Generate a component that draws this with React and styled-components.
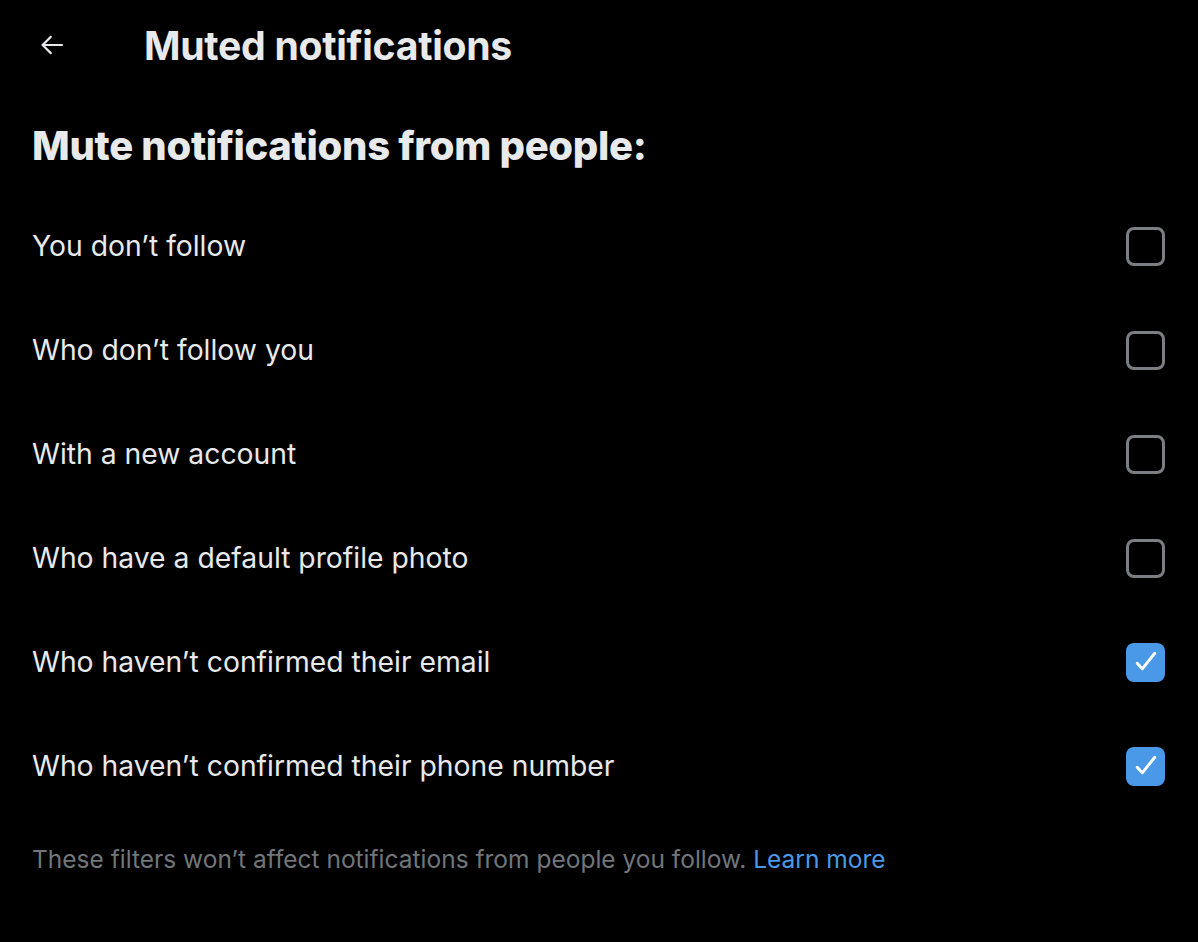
import React, { useState } from "react";
import styled, { createGlobalStyle } from "styled-components";

const GlobalStyle = createGlobalStyle`
  html, body {
    margin: 0;
    padding: 0;
    background: #000;
  }
  body {
    font-family: Inter, "Noto Sans", sans-serif;
    color: #e7e9ea;
  }
`;

const Page = styled.div`
  width: 1198px;
  height: 942px;
  background: #000;
  box-sizing: border-box;
`;

const Header = styled.div`
  height: 90px;
  display: flex;
  align-items: center;
  padding-left: 36px;
`;

const BackButton = styled.button`
  width: 32px;
  height: 32px;
  padding: 0;
  border: none;
  background: none;
  color: #e7e9ea;
  display: flex;
  align-items: center;
  justify-content: center;
  margin-right: 76px;
  cursor: pointer;
`;

const Title = styled.h1`
  margin: 0;
  font-size: 39.2px;
  font-weight: 700;
  letter-spacing: -0.3px;
  color: #e7e9ea;
`;

const Section = styled.div`
  padding: 0 33px 0 32px;
`;

const Heading = styled.h2`
  margin: 0;
  height: 104px;
  padding-top: 6px;
  box-sizing: border-box;
  display: flex;
  align-items: center;
  font-size: 40px;
  font-weight: 800;
  letter-spacing: -0.3px;
  color: #e7e9ea;
`;

const Row = styled.label`
  height: 104px;
  display: flex;
  align-items: center;
  justify-content: space-between;
  cursor: pointer;
`;

const RowText = styled.span`
  font-size: 28.3px;
  font-weight: 400;
  color: #e7e9ea;
`;

const Box = styled.span`
  width: 39px;
  height: 39px;
  box-sizing: border-box;
  border-radius: 8px;
  border: ${(p) => (p.$checked ? "none" : "3px solid #7b7f83")};
  background: ${(p) => (p.$checked ? "#4a99e9" : "transparent")};
  display: flex;
  align-items: center;
  justify-content: center;
`;

const Footer = styled.p`
  margin: 0;
  padding-top: 26px;
  font-size: 24.5px;
  color: #71767b;
`;

const Link = styled.a`
  color: #4a99e9;
  text-decoration: none;
`;

const items = [
  { label: "You don’t follow", checked: false },
  { label: "Who don’t follow you", checked: false },
  { label: "With a new account", checked: false },
  { label: "Who have a default profile photo", checked: false },
  { label: "Who haven’t confirmed their email", checked: true },
  { label: "Who haven’t confirmed their phone number", checked: true },
];

export default function App() {
  const [checks, setChecks] = useState(items.map((i) => i.checked));

  const toggle = (idx) => {
    setChecks(checks.map((c, i) => (i === idx ? !c : c)));
  };

  return (
    <Page>
      <GlobalStyle />
      <Header>
        <BackButton aria-label="Back">
          <svg width="30" height="30" viewBox="0 0 24 24" fill="none" stroke="currentColor" strokeWidth="1.7" strokeLinecap="round" strokeLinejoin="round">
            <path d="M20 12H4.5" />
            <path d="M11 5.5L4.5 12l6.5 6.5" />
          </svg>
        </BackButton>
        <Title>Muted notifications</Title>
      </Header>
      <Section>
        <Heading>Mute notifications from people:</Heading>
        {items.map((item, i) => (
          <Row key={item.label} onClick={() => toggle(i)}>
            <RowText>{item.label}</RowText>
            <Box $checked={checks[i]}>
              {checks[i] && (
                <svg width="30" height="30" viewBox="0 0 24 24" fill="none" stroke="#fff" strokeWidth="2.3" strokeLinecap="round" strokeLinejoin="round">
                  <path d="M5 13l4 4.5L19 5" />
                </svg>
              )}
            </Box>
          </Row>
        ))}
        <Footer>
          These filters won’t affect notifications from people you follow.{" "}
          <Link href="#">Learn more</Link>
        </Footer>
      </Section>
    </Page>
  );
}
